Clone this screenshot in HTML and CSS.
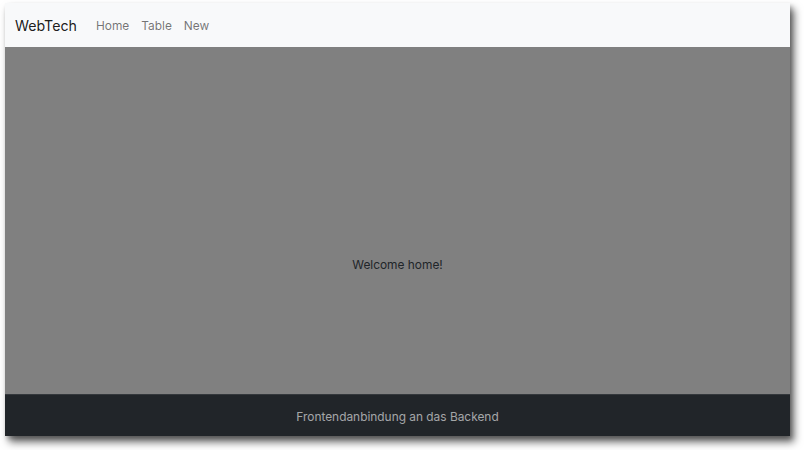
FILE: index.html
```html
<!DOCTYPE html>
<html lang="de">
<head>
<meta charset="utf-8">
<title>WebTech</title>
<link rel="stylesheet" href="styles.css">
</head>
<body>
<div class="window">
  <nav class="navbar">
    <span class="brand">WebTech</span>
    <ul class="nav">
      <li><a href="#">Home</a></li>
      <li><a href="#">Table</a></li>
      <li><a href="#">New</a></li>
    </ul>
  </nav>
  <main class="main">
    <p class="welcome">Welcome home!</p>
  </main>
  <footer class="footer">Frontendanbindung an das Backend</footer>
</div>
</body>
</html>
```

FILE: styles.css
```css
html, body {
  margin: 0;
  padding: 0;
  background: #ffffff;
}
body {
  font-family: Inter, "Noto Sans", sans-serif;
  padding: 3px 0 0 5px;
  height: 450px;
  box-sizing: border-box;
  overflow: hidden;
}
.window {
  width: 785px;
  height: 433px;
  display: flex;
  flex-direction: column;
  box-shadow: 4px 6px 8px rgba(0, 0, 0, 0.6), 2px 3px 4px rgba(0, 0, 0, 0.2);
}
.navbar {
  height: 44px;
  background: #f8f9fa;
  display: flex;
  align-items: center;
  padding: 0 10px;
  box-sizing: border-box;
}
.brand {
  font-size: 14.2px;
  color: rgba(0, 0, 0, 0.9);
  margin-right: 13px;
}
.nav {
  list-style: none;
  margin: 0;
  padding: 0;
  display: flex;
}
.nav a {
  display: block;
  padding: 0 6px;
  font-size: 11.9px;
  color: rgba(0, 0, 0, 0.55);
  text-decoration: none;
}
.main {
  flex: 1;
  background: #808080;
  display: flex;
  justify-content: center;
  padding-top: 210px;
  box-sizing: border-box;
}
.welcome {
  margin: 0;
  font-size: 11.9px;
  color: #212529;
}
.footer {
  height: 42px;
  background: #212529;
  border-top: 1px solid #34383c;
  box-sizing: border-box;
  display: flex;
  align-items: center;
  justify-content: center;
  padding-top: 1px;
  font-size: 11.9px;
  color: rgba(255, 255, 255, 0.6);
}
```
